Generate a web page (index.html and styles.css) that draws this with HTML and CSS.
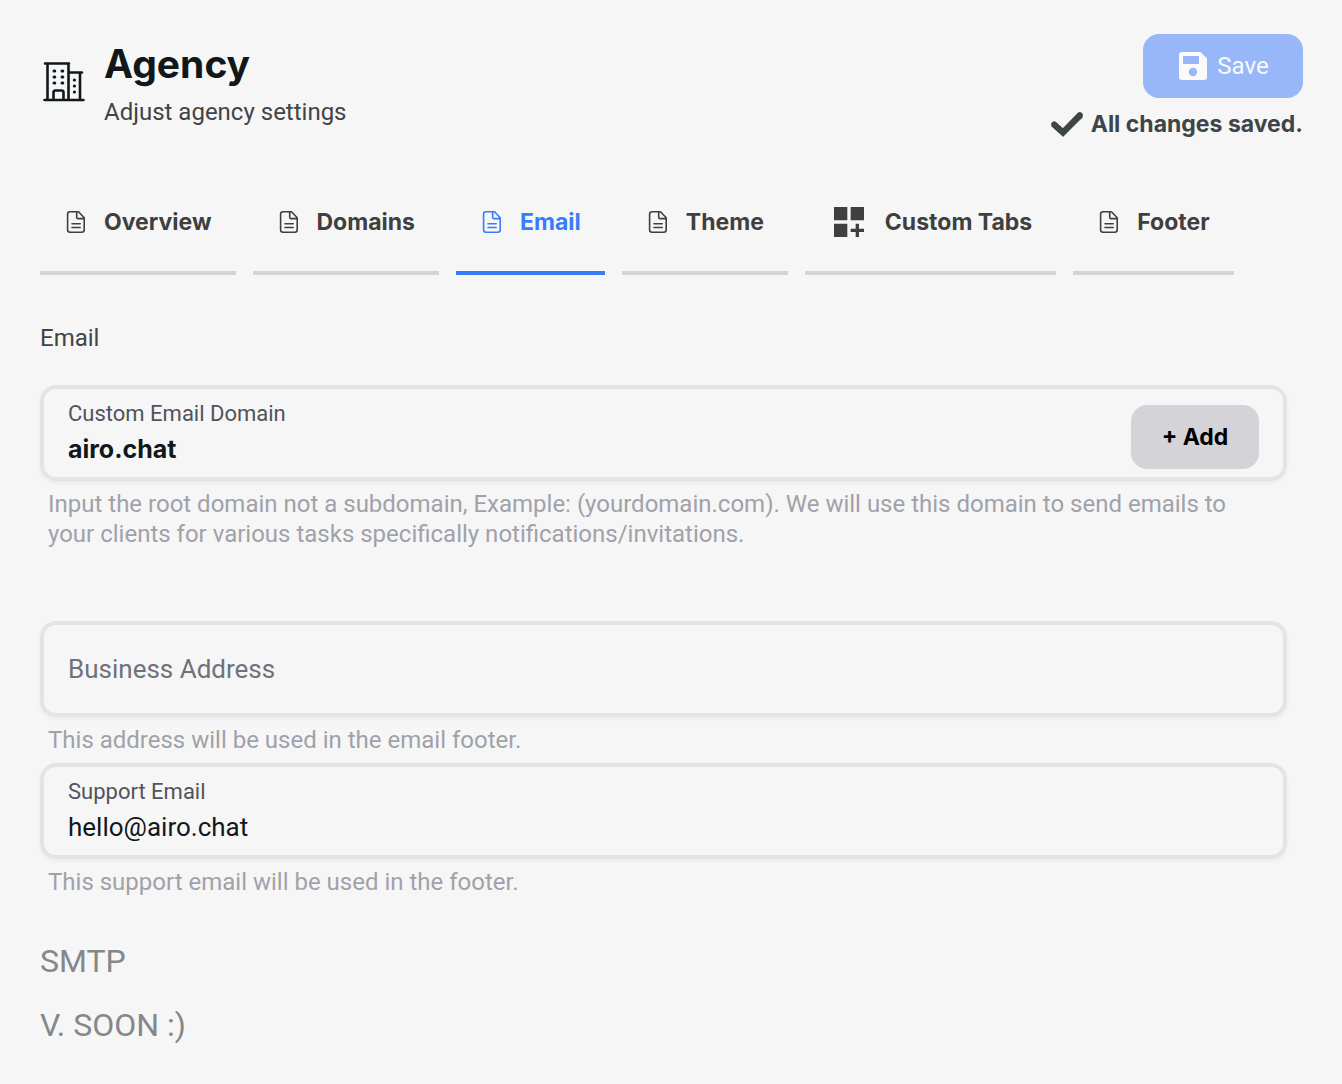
FILE: index.html
```html
<!DOCTYPE html>
<html lang="en">
<head>
<meta charset="utf-8">
<meta name="viewport" content="width=device-width, initial-scale=1">
<title>Agency settings</title>
<link rel="stylesheet" href="styles.css">
</head>
<body>
<svg class="sprite" aria-hidden="true">
  <symbol id="doc" viewBox="0 0 24 24">
    <path d="M14.5 1.8H6a2.4 2.4 0 0 0-2.4 2.4v15.600a2.400 2.400 0 0 0 2.400 2.400h11.800a2.400 2.400 0 0 0 2.400-2.400V7.800zM12.700 1.800v5.400a1.400 1.400 0 0 0 1.400 1.400h6M8 13.700h8.200M8 17.500h8.200" fill="none" stroke="currentColor" stroke-width="1.600" stroke-linecap="round" stroke-linejoin="round"/>
  </symbol>
</svg>
<main class="page">
  <header class="header">
    <div class="heading">
      <svg class="heading-icon" viewBox="0 0 48 48" aria-hidden="true">
        <g fill="none" stroke="currentColor" stroke-width="2.600" stroke-linecap="round" stroke-linejoin="round">
          <path d="M5 6.500h24M4.500 43h39M7.500 6.500V43M28.500 6.500V43M28.500 15.500h13.500M40 15.500V43M13.500 43v-7.500a2 2 0 0 1 2-2h6a2 2 0 0 1 2 2V43"/>
          <path stroke-width="3" d="M14 14h.8M22 14h.8M14 20h.8M22 20h.8M14 26h.8M22 26h.8M34.300 23h.2M34.300 29h.2M34.300 35h.2"/>
        </g>
      </svg>
      <div>
        <h1 class="title">Agency</h1>
        <p class="subtitle">Adjust agency settings</p>
      </div>
    </div>
    <div class="actions">
      <button class="save" type="submit" form="email-form">
        <svg class="save-icon" viewBox="0 0 28 28" aria-hidden="true"><path fill="currentColor" fill-rule="evenodd" d="M3 0h18.500L28 6.500V25a3 3 0 0 1-3 3H3a3 3 0 0 1-3-3V3a3 3 0 0 1 3-3zM4 4v8h16V4zM14 15.800a4.200 4.200 0 1 0 0 8.400 4.200 4.200 0 0 0 0-8.400z"/></svg>
        Save
      </button>
      <p class="status">
        <svg class="status-icon" viewBox="0 0 32 32" aria-hidden="true"><path d="M2.300 16l9.700 8.500L29.700 7" fill="none" stroke="currentColor" stroke-width="6"/><path d="M3.200 16.500l8.800 8L28.800 7.200" fill="none" stroke="currentColor" stroke-width="6" stroke-linecap="round"/></svg>
        All changes saved.
      </p>
    </div>
  </header>

  <nav class="tabs" aria-label="Agency settings">
    <a class="tab" href="#overview"><svg class="tab-icon" aria-hidden="true"><use href="#doc"/></svg>Overview</a>
    <a class="tab" href="#domains"><svg class="tab-icon" aria-hidden="true"><use href="#doc"/></svg>Domains</a>
    <a class="tab tab-active" href="#email" aria-current="page"><svg class="tab-icon" aria-hidden="true"><use href="#doc"/></svg>Email</a>
    <a class="tab" href="#theme"><svg class="tab-icon" aria-hidden="true"><use href="#doc"/></svg>Theme</a>
    <a class="tab" href="#custom-tabs"><svg class="tab-icon tab-icon-large" viewBox="0 0 24 24" aria-hidden="true"><path fill="currentColor" d="M3 3h8v8H3zM13 3h8v8h-8zM3 13h8v8H3zM18 13h-2v3h-3v2h3v3h2v-3h3v-2h-3z"/></svg>Custom Tabs</a>
    <a class="tab" href="#footer"><svg class="tab-icon" aria-hidden="true"><use href="#doc"/></svg>Footer</a>
  </nav>

  <form class="form" id="email-form">
    <h2 class="section-title">Email</h2>
    <div class="field">
      <div class="field-body">
        <label class="field-label" for="domain">Custom Email Domain</label>
        <input class="field-input field-input-strong" id="domain" type="text" value="airo.chat">
      </div>
      <button class="add" type="button">+ Add</button>
    </div>
    <p class="hint hint-spaced">Input the root domain not a subdomain, Example: (yourdomain.com). We will use this domain to send emails to your clients for various tasks specifically notifications/invitations.</p>
    <div class="field">
      <input class="field-input" type="text" aria-label="Business Address" placeholder="Business Address">
    </div>
    <p class="hint">This address will be used in the email footer.</p>
    <div class="field">
      <div class="field-body">
        <label class="field-label" for="support">Support Email</label>
        <input class="field-input" id="support" type="email" value="hello@airo.chat">
      </div>
    </div>
    <p class="hint">This support email will be used in the footer.</p>
  </form>

  <section class="smtp">
    <h2 class="smtp-line">SMTP</h2>
    <p class="smtp-line">V. SOON :)</p>
  </section>
</main>
</body>
</html>
```

FILE: styles.css
```css
* { box-sizing: border-box; }

body {
  margin: 0;
  background: #f6f6f6;
  color: #11181c;
  font: 24px/30px Roboto, "Liberation Sans", sans-serif;
}

h1, h2, p { margin: 0; font-weight: 400; }

button, input { font: inherit; color: inherit; }

.title, .status, .tab, .field .field-input-strong, .field .add {
  font-family: Inter, "Liberation Sans", sans-serif;
  font-weight: 700;
}

.sprite { position: absolute; width: 0; height: 0; }

.page { padding: 34px 39px 24px 40px; }

.header {
  display: flex;
  justify-content: space-between;
  align-items: flex-start;
}

.heading { display: flex; align-items: flex-start; gap: 16px; padding-top: 4px; }
.heading-icon { width: 48px; height: 48px; margin-top: 19px; }
.heading .title { margin-bottom: 4px; font-size: 39px; line-height: 52px; }
.subtitle { line-height: 36px; color: #3f4447; }

.actions { display: flex; flex-direction: column; align-items: flex-end; gap: 8px; }

.save {
  display: flex;
  align-items: center;
  justify-content: center;
  gap: 10px;
  width: 160px;
  height: 64px;
  padding: 0 6px 0 8px;
  border: 0;
  border-radius: 16px;
  background: #97b7f8;
  color: #fafafa;
}
.save-icon { width: 28px; height: 28px; }

.status {
  display: flex;
  align-items: center;
  gap: 8px;
  font-size: 23px;
  line-height: 36px;
  color: #3f4447;
}
.status-icon { width: 32px; height: 32px; }

.tabs { display: flex; flex-wrap: wrap; gap: 17px; margin-top: 32px; }

.tab {
  display: flex;
  align-items: center;
  gap: 16px;
  height: 101px;
  padding: 0 24px 2px;
  border-bottom: 4px solid #d4d4d8;
  color: #3f3f3f;
  font-size: 23px;
  text-decoration: none;
}
.tab-active { color: #387cf9; border-color: #387cf9; }
.tab-icon { width: 24px; height: 24px; }
.tab-icon-large { width: 40px; height: 40px; }

.form { padding-right: 16px; }

.section-title { margin: 48px 0 32px; font-size: 24px; color: #3f4447; }

.field {
  display: flex;
  align-items: center;
  gap: 16px;
  height: 96px;
  padding: 0 24px;
  border: 4px solid #e4e4e7;
  border-radius: 16px;
  box-shadow: 0 2px 4px rgba(0, 0, 0, 0.05);
}
.field-body { display: flex; flex-direction: column; flex: 1; padding-bottom: 4px; }
.field-label { font-size: 22px; line-height: 36px; color: #52525b; }
.field-input {
  width: 100%;
  height: 34px;
  padding: 0;
  border: 0;
  outline: 0;
  background: transparent;
  font-size: 26px;
}
.field-input::placeholder { color: #71717a; opacity: 1; }
.field .field-input-strong { font-size: 25px; }

.add {
  align-self: flex-end;
  width: 128px;
  height: 64px;
  margin-bottom: 8px;
  border: 0;
  border-radius: 16px;
  background: #d4d4d8;
  color: #000;
  font-size: 23px;
}

.hint { padding: 8px 32px 8px 8px; color: #a1a1aa; }
.hint-spaced { margin-bottom: 64px; }

.smtp { margin-top: 24px; color: #84888b; }
.smtp-line { font-size: 32px; line-height: 64px; }
```
